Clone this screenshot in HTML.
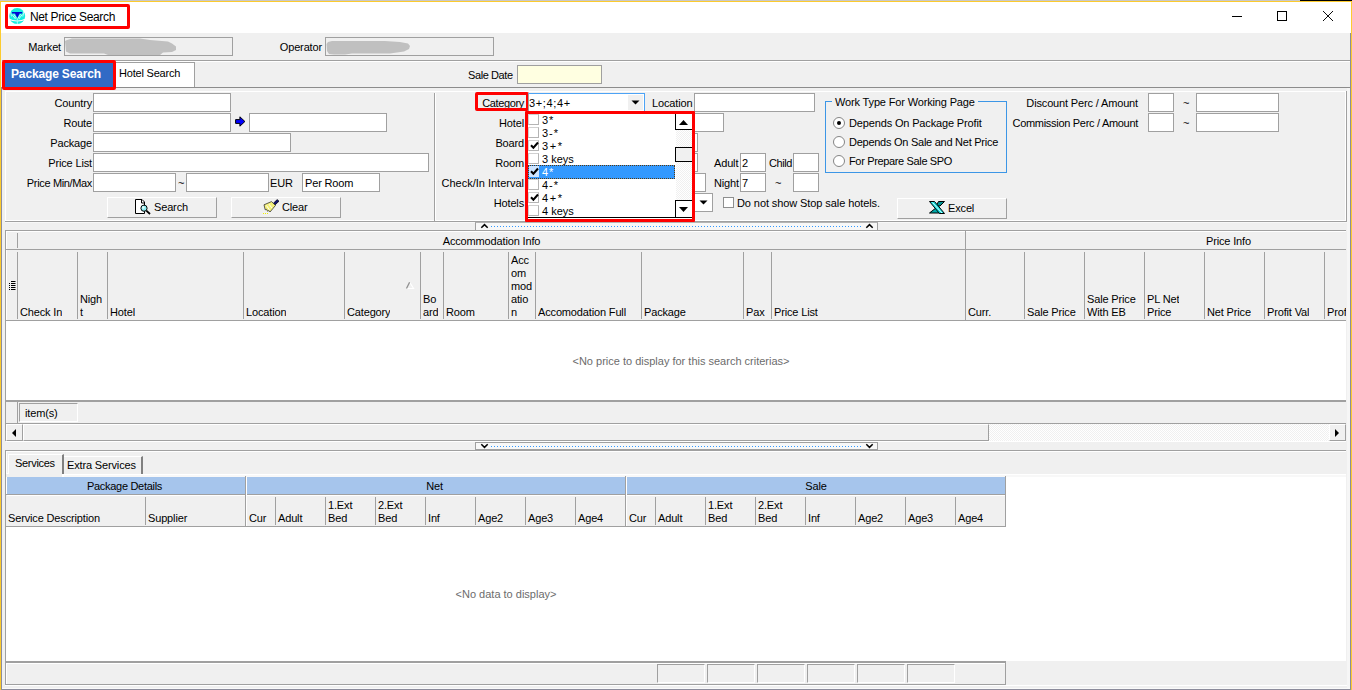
<!DOCTYPE html>
<html>
<head>
<meta charset="utf-8">
<title>Net Price Search</title>
<style>
html,body{margin:0;padding:0;}
body{width:1352px;height:690px;overflow:hidden;background:#f0f0f0;position:relative;
 font-family:"Liberation Sans",sans-serif;font-size:11px;line-height:13px;color:#000;letter-spacing:-0.15px;}
.a{position:absolute;box-sizing:border-box;}
.t{position:absolute;white-space:nowrap;line-height:13px;}
.r{position:absolute;white-space:nowrap;line-height:13px;text-align:right;}
.inp{position:absolute;box-sizing:border-box;background:#fff;border:1px solid #a0a0a0;height:19px;padding:3px 0 0 2px;white-space:nowrap;overflow:hidden;}
.btn{position:absolute;box-sizing:border-box;background:#f0f0f0;border:1px solid #a0a0a0;border-top-color:#fff;border-left-color:#fff;height:21px;}
.hl{position:absolute;height:1px;background:#a0a0a0;}
.vl{position:absolute;width:1px;background:#a0a0a0;}
.red{position:absolute;box-sizing:border-box;border:3px solid #ff0000;border-radius:2px;}
.ch{position:absolute;white-space:nowrap;line-height:13px;}
.dither{background-image:conic-gradient(#fff 25%,#f0f0f0 0 50%,#fff 0 75%,#f0f0f0 0);background-size:2px 2px;}
</style>
</head>
<body>
<!-- window frame -->
<div class="a" style="left:0;top:0;width:1352px;height:1px;background:#c9c9c9"></div>
<div class="a" style="left:1300px;top:0;width:52px;height:1px;background:#000"></div>
<div class="a" style="left:0;top:1px;width:1352px;height:1px;background:#fccb2e"></div>
<div class="a" style="left:0;top:1px;width:1px;height:689px;background:#fccb2e"></div>
<div class="a" style="left:1351px;top:1px;width:1px;height:689px;background:#fccb2e"></div>
<div class="a" style="left:1350px;top:33px;width:1px;height:657px;background:#8c8c9c"></div>
<!-- title bar -->
<div class="a" id="titlebar" style="left:1px;top:2px;width:1350px;height:31px;background:#fff"></div>
<svg class="a" style="left:9px;top:8px" width="17" height="17" viewBox="9 8 17 17">
 <circle cx="17.200" cy="16.100" r="8" fill="#14eee0"/>
 <path d="M9 13.500l1.300-2.500 1.200 5.500M25.300 13.500l-1.300-2.500-1.200 5.500" stroke="#fff" stroke-width="0.900" fill="none" opacity="0.800"/>
 <path d="M12 14.500l3.500 4.500M13.800 14.200l2.600 4M22.300 14.500l-3.500 4.500M20.600 14.200l-2.600 4" stroke="#c8fffa" stroke-width="1" fill="none"/>
 <path d="M11.900 11.900h10.300v1.500h-2.600l-2.300 4.700-2.300-4.700h-3.100z" fill="#0404d4"/>
 <path d="M9.300 19.300c2.500 1.300 5.300 1.600 7.600 1.700M25 19.300c-2.500 1.300-5 1.600-7.300 1.700" stroke="#fff" stroke-width="1.200" fill="none"/>
 <path d="M17.300 18.500v5.600" stroke="#c8fffa" stroke-width="0.900"/>
</svg>
<div class="t" style="left:30px;top:10px;font-size:12px;line-height:15px;letter-spacing:-0.36px">Net Price Search</div>
<div class="red" style="left:5px;top:4px;width:125px;height:25px"></div>
<!-- window controls -->
<div class="a" style="left:1232px;top:16px;width:10px;height:1px;background:#000"></div>
<div class="a" style="left:1277px;top:11px;width:10px;height:10px;border:1px solid #000"></div>
<svg class="a" style="left:1322px;top:10px" width="12" height="12" viewBox="0 0 12 12"><path d="M1 1L11 11M11 1L1 11" stroke="#000" stroke-width="0.95" fill="none"/></svg>

<!-- market / operator row -->
<div class="r" style="left:0;width:61px;top:41px">Market</div>
<div class="a" style="left:64px;top:37px;width:169px;height:19px;border:1px solid #a0a0a0;background:#f0f0f0"></div>
<svg class="a" style="left:65px;top:38px" width="115" height="17" viewBox="65 38 115 17"><path d="M65 41L67 40 72 38.500H140L150 40 168 41.500 172 43.500 176 46.500 176 50 172 52 163 52.500 160 55H108L104 53.500H70L66 51.500Z" fill="#c0c0c0"/></svg>
<div class="r" style="left:200px;width:122px;top:41px">Operator</div>
<div class="a" style="left:325px;top:37px;width:169px;height:19px;border:1px solid #a0a0a0;background:#f0f0f0"></div>
<svg class="a" style="left:326px;top:38px" width="90" height="17" viewBox="326 38 90 17"><path d="M326.500 44L328 42 332 41H385L400 42 408 43.500 410 46 409 49 404 51.500 390 53.500H352L345 54.500H334L329 54 327 51Z" fill="#c0c0c0"/></svg>
<div class="hl" style="left:2px;top:60px;width:1348px"></div>
<div class="hl" style="left:2px;top:61px;width:1348px;background:#fff"></div>

<!-- tabs -->
<div class="a" style="left:115px;top:62px;width:80px;height:26px;background:#fff;border:1px solid #a0a0a0;border-bottom:none"></div>
<div class="t" style="left:119px;top:67px;letter-spacing:-0.2px">Hotel Search</div>
<div class="hl" style="left:116px;top:87px;width:1234px;background:#8c8c8c"></div>
<div class="a" style="left:4px;top:62px;width:109px;height:26px;background:#316ac5"></div>
<div class="t" style="left:11px;top:68px;font-size:12px;font-weight:bold;color:#fff;letter-spacing:-0.15px">Package Search</div>
<div class="red" style="left:2px;top:60px;width:114px;height:30px"></div>
<div class="t" style="left:468px;top:69px;letter-spacing:-0.4px">Sale Date</div>
<div class="a" style="left:517px;top:65px;width:85px;height:19px;border:1px solid #a0a0a0;background:#ffffe1"></div>

<!-- main panel frame -->
<div class="vl" style="left:1px;top:87px;height:603px;background:#8c8c9c"></div>
<div class="hl" style="left:5px;top:91px;width:1341px;background:#fff;height:1px"></div>
<div class="vl" style="left:5px;top:91px;height:130px;background:#fff"></div>
<div class="vl" style="left:434px;top:93px;height:128px"></div>
<div class="vl" style="left:435px;top:93px;height:128px;background:#fff"></div>
<div class="hl" style="left:5px;top:221px;width:1342px"></div>
<div class="hl" style="left:5px;top:222px;width:1342px;background:#f8f8f8"></div>
<div class="vl" style="left:1346px;top:91px;height:131px"></div>
<div class="vl" style="left:1345px;top:92px;height:129px;background:#fff"></div>
<div class="hl" style="left:436px;top:220px;width:909px;background:#fff"></div>
<div class="hl" style="left:6px;top:220px;width:428px;background:#fff"></div>
<div class="vl" style="left:1347px;top:88px;height:600px;background:#f6f6f6;width:3px"></div>

<!-- left panel -->
<div class="r" style="left:0;width:92px;top:97px">Country</div>
<div class="inp" style="left:93px;top:93px;width:138px"></div>
<div class="r" style="left:0;width:92px;top:117px">Route</div>
<div class="inp" style="left:93px;top:113px;width:138px"></div>
<svg class="a" style="left:235px;top:116px" width="11" height="11" viewBox="0 0 11 11"><path d="M0.600 3.600h4.300v-2.800l5 4.700-5 4.700v-2.800h-4.300z" fill="#0000ff" stroke="#000" stroke-width="1"/></svg>
<div class="inp" style="left:249px;top:113px;width:138px"></div>
<div class="r" style="left:0;width:92px;top:137px">Package</div>
<div class="inp" style="left:93px;top:133px;width:198px"></div>
<div class="r" style="left:0;width:92px;top:157px">Price List</div>
<div class="inp" style="left:93px;top:153px;width:336px"></div>
<div class="r" style="left:0;width:92px;top:177px;letter-spacing:-0.35px">Price Min/Max</div>
<div class="inp" style="left:93px;top:173px;width:83px"></div>
<div class="t" style="left:178px;top:177px">~</div>
<div class="inp" style="left:186px;top:173px;width:83px"></div>
<div class="t" style="left:270px;top:177px">EUR</div>
<div class="inp" style="left:302px;top:173px;width:78px">Per Room</div>
<div class="btn" style="left:107px;top:197px;width:110px"></div>
<svg class="a" style="left:134px;top:199px" width="18" height="17" viewBox="0 0 18 17">
 <path d="M1.500 0.500h6.500l2.500 2.500v11.500h-9z" fill="#fff" stroke="#000" stroke-width="1"/>
 <path d="M7.500 0.500v3.500h3" fill="none" stroke="#000" stroke-width="1"/>
 <circle cx="10" cy="9.200" r="3.100" fill="#8ff0f4" stroke="#000" stroke-width="1"/>
 <circle cx="9.300" cy="8.500" r="1.200" fill="#e8ffff"/>
 <path d="M12.300 11.600l3.700 3.400" stroke="#000" stroke-width="1.800"/>
</svg>
<div class="t" style="left:154px;top:201px">Search</div>
<div class="btn" style="left:231px;top:197px;width:110px"></div>
<svg class="a" style="left:262px;top:199px" width="18" height="17" viewBox="0 0 18 17">
 <path d="M11.300 4.300L15.200 0.600 17 2.200 13 6z" fill="#101070" stroke="#000" stroke-width="0.700"/>
 <path d="M2 5.800L9.500 2.600 13.500 6.400 8 13 6.800 11.500 5.600 12.300 4.600 10.300 3.200 10.800z" fill="#f4f07a" stroke="#333" stroke-width="0.800"/>
 <path d="M4.500 6.500l3 4.500M7 5.200l3 4" stroke="#fff" stroke-width="0.900"/>
 <path d="M1 14.500h1M3 14.500h1M5 14.500h1" stroke="#f0f000" stroke-width="1"/>
</svg>
<div class="t" style="left:282px;top:201px">Clear</div>

<!-- middle panel -->
<div class="r" style="left:430px;width:94px;top:97px;letter-spacing:-0.35px">Category</div>
<div class="red" style="left:475px;top:92px;width:54px;height:19px"></div>
<div class="a" style="left:528px;top:93px;width:117px;height:19px;background:#fff;border:1px solid #4da3f5;border-left-color:#a0a0a0"></div>
<div class="t" style="left:529px;top:97px;letter-spacing:0.65px">3+;4;4+</div>
<div class="a" style="left:628px;top:95px;width:15px;height:15px;background:#f0f0f0"></div>
<svg class="a" style="left:631px;top:100px" width="9" height="5" viewBox="0 0 9 5"><path d="M0.5 0.5h8l-4 4z" fill="#000"/></svg>
<div class="t" style="left:652px;top:97px">Location</div>
<div class="inp" style="left:694px;top:93px;width:121px"></div>
<div class="r" style="left:430px;width:94px;top:117px">Hotel</div>
<div class="inp" style="left:620px;top:113px;width:104px"></div>
<div class="r" style="left:430px;width:94px;top:137px">Board</div>
<div class="inp" style="left:620px;top:133px;width:78px"></div>
<div class="r" style="left:430px;width:94px;top:157px">Room</div>
<div class="inp" style="left:620px;top:153px;width:78px"></div>
<div class="r" style="left:430px;width:94px;top:177px;letter-spacing:0">Check/In Interval</div>
<div class="inp" style="left:620px;top:173px;width:86px"></div>
<div class="r" style="left:430px;width:94px;top:197px">Hotels</div>
<div class="inp" style="left:620px;top:193px;width:93px"></div>
<svg class="a" style="left:699px;top:200px" width="9" height="5" viewBox="0 0 9 5"><path d="M0.5 0.5h8l-4 4z" fill="#000"/></svg>
<div class="t" style="left:714px;top:157px">Adult</div>
<div class="inp" style="left:740px;top:153px;width:26px;padding-left:1px">2</div>
<div class="t" style="left:769px;top:157px;letter-spacing:-0.4px">Child</div>
<div class="inp" style="left:793px;top:153px;width:26px"></div>
<div class="t" style="left:714px;top:177px">Night</div>
<div class="inp" style="left:740px;top:173px;width:26px;padding-left:1px">7</div>
<div class="t" style="left:775px;top:177px">~</div>
<div class="inp" style="left:793px;top:173px;width:26px"></div>
<div class="a" style="left:723px;top:197px;width:11px;height:11px;background:#fff;border:1px solid #8e8f8f"></div>
<div class="t" style="left:737px;top:197px;letter-spacing:-0.09px">Do not show Stop sale hotels.</div>

<!-- dropdown list -->
<div class="a" style="left:528px;top:113px;width:166px;height:107px;background:#fff"></div>
<div class="a dither" style="left:676px;top:114px;width:17px;height:104px"></div>
<div class="a" style="left:528px;top:114px;width:11px;height:11px;background:#fff;border:1px solid #b4b4b4;border-top-color:#d0d0d0;border-left-color:#d0d0d0"></div>
<div class="t" style="left:542px;top:114px;color:#000;letter-spacing:1px">3*</div>
<div class="a" style="left:528px;top:127px;width:11px;height:11px;background:#fff;border:1px solid #b4b4b4;border-top-color:#d0d0d0;border-left-color:#d0d0d0"></div>
<div class="t" style="left:542px;top:127px;color:#000;letter-spacing:1px">3-*</div>
<div class="a" style="left:528px;top:140px;width:11px;height:11px;background:#fff;border:1px solid #b4b4b4;border-top-color:#d0d0d0;border-left-color:#d0d0d0"></div>
<svg class="a" style="left:530px;top:141px" width="9" height="9" viewBox="0 0 9 9"><path d="M1 4.200L3.400 6.700 8 1.500" stroke="#000" stroke-width="2" fill="none"/></svg>
<div class="t" style="left:542px;top:140px;color:#000;letter-spacing:1.6px">3+*</div>
<div class="a" style="left:528px;top:153px;width:11px;height:11px;background:#fff;border:1px solid #b4b4b4;border-top-color:#d0d0d0;border-left-color:#d0d0d0"></div>
<div class="t" style="left:542px;top:153px;color:#000;letter-spacing:0">3 keys</div>
<div class="a" style="left:528px;top:165px;width:147px;height:14px;background:#3399ff;border:1px dotted #5a3a10"></div>
<div class="a" style="left:529px;top:166px;width:10px;height:11px;background:#cce4ff"></div>
<svg class="a" style="left:530px;top:167px" width="9" height="9" viewBox="0 0 9 9"><path d="M1 4.200L3.400 6.700 8 1.500" stroke="#000" stroke-width="2" fill="none"/></svg>
<div class="t" style="left:542px;top:166px;color:#fff;letter-spacing:1px">4*</div>
<div class="a" style="left:528px;top:179px;width:11px;height:11px;background:#fff;border:1px solid #b4b4b4;border-top-color:#d0d0d0;border-left-color:#d0d0d0"></div>
<div class="t" style="left:542px;top:179px;color:#000;letter-spacing:1px">4-*</div>
<div class="a" style="left:528px;top:192px;width:11px;height:11px;background:#fff;border:1px solid #b4b4b4;border-top-color:#d0d0d0;border-left-color:#d0d0d0"></div>
<svg class="a" style="left:530px;top:193px" width="9" height="9" viewBox="0 0 9 9"><path d="M1 4.200L3.400 6.700 8 1.500" stroke="#000" stroke-width="2" fill="none"/></svg>
<div class="t" style="left:542px;top:192px;color:#000;letter-spacing:1.6px">4+*</div>
<div class="a" style="left:528px;top:205px;width:11px;height:11px;background:#fff;border:1px solid #b4b4b4;border-top-color:#d0d0d0;border-left-color:#d0d0d0"></div>
<div class="t" style="left:542px;top:205px;color:#000;letter-spacing:0">4 keys</div>
<div class="a" style="left:675px;top:113px;width:18px;height:17px;background:#fff;border:1px solid #000"></div>
<svg class="a" style="left:679px;top:120px" width="9" height="5" viewBox="0 0 9 5"><path d="M0 5h9l-4.500-5z" fill="#000"/></svg>
<div class="a" style="left:675px;top:147px;width:18px;height:15px;background:#f0f0f0;border:1px solid #000"></div>
<div class="a" style="left:675px;top:200px;width:18px;height:18px;background:#fff;border:1px solid #000"></div>
<svg class="a" style="left:679px;top:207px" width="9" height="5" viewBox="0 0 9 5"><path d="M0 0h9l-4.500 5z" fill="#000"/></svg>
<div class="hl" style="left:528px;top:217px;width:165px;background:#000"></div>
<div class="red" style="left:525px;top:111px;width:170px;height:111px;border-radius:1px"></div>

<!-- right panel -->
<div class="a" style="left:825px;top:101px;width:182px;height:72px;border:1px solid #3c96e6"></div>
<div class="t" style="left:832px;top:96px;background:#f0f0f0;padding:0 3px">Work Type For Working Page</div>
<div class="t" style="left:849px;top:117px">Depends On Package Profit</div>
<div class="t" style="left:849px;top:136px;letter-spacing:-0.26px">Depends On Sale and Net Price</div>
<div class="t" style="left:849px;top:155px;letter-spacing:-0.35px">For Prepare Sale SPO</div>
<div class="a" style="left:833px;top:117px;width:12px;height:12px;border-radius:50%;border:1px solid #858585;background:#fff"></div>
<div class="a" style="left:837px;top:121px;width:4px;height:4px;border-radius:50%;background:#000"></div>
<div class="a" style="left:833px;top:136px;width:12px;height:12px;border-radius:50%;border:1px solid #858585;background:#fff"></div>
<div class="a" style="left:833px;top:155px;width:12px;height:12px;border-radius:50%;border:1px solid #858585;background:#fff"></div>
<div class="r" style="left:1000px;width:138px;top:97px">Discount Perc / Amount</div>
<div class="inp" style="left:1148px;top:93px;width:26px"></div>
<div class="t" style="left:1183px;top:97px">~</div>
<div class="inp" style="left:1196px;top:93px;width:83px"></div>
<div class="r" style="left:1000px;width:138px;top:117px;letter-spacing:-0.3px">Commission Perc / Amount</div>
<div class="inp" style="left:1148px;top:113px;width:26px"></div>
<div class="t" style="left:1183px;top:117px">~</div>
<div class="inp" style="left:1196px;top:113px;width:83px"></div>
<div class="btn" style="left:897px;top:198px;width:110px"></div>
<svg class="a" style="left:928px;top:200px" width="18" height="15" viewBox="0 0 18 15">
 <path d="M10.500 1.500h6l-4.500 4.500h-4z" fill="#009090" stroke="#000" stroke-width="1"/>
 <path d="M1.500 13h10.500l-3.500-5.500z" fill="#00a8a8" stroke="#000" stroke-width="1"/>
 <path d="M1.500 1.500h5l10 12h-5z" fill="#10d8d8" stroke="#000" stroke-width="1"/>
 <path d="M4.500 2.500l9.500 10.500" stroke="#d8ffff" stroke-width="1"/>
</svg>
<div class="t" style="left:948px;top:202px">Excel</div>

<!-- splitter 1 -->
<div class="a" style="left:475px;top:222px;width:403px;height:8px;border-left:1px solid #a0a0a0;border-right:1px solid #a0a0a0;border-top:1px solid #b4b4b4;background:#f8f8f8"></div>
<div class="a" style="left:491px;top:226px;width:370px;height:1px;background-image:linear-gradient(90deg,#3399ff 0,#3399ff 1px,transparent 1px);background-size:3px 1px"></div>
<svg class="a" style="left:480px;top:223px" width="9" height="6" viewBox="0 0 9 6"><path d="M1.300 4.800L4.500 1.600 7.700 4.800" stroke="#000" stroke-width="1.500" fill="none"/></svg>
<svg class="a" style="left:865px;top:223px" width="9" height="6" viewBox="0 0 9 6"><path d="M1.300 4.800L4.500 1.600 7.700 4.800" stroke="#000" stroke-width="1.500" fill="none"/></svg>
<!-- grid -->
<div class="a" style="left:5px;top:230px;width:1341px;height:211px;border:1px solid #a0a0a0;border-right:none;border-bottom:none;background:#f0f0f0"></div>
<div class="hl" style="left:6px;top:231px;width:1340px;background:#fff"></div>
<div class="vl" style="left:6px;top:231px;height:90px;background:#fff"></div>
<div class="hl" style="left:6px;top:249px;width:1340px"></div>
<div class="vl" style="left:17px;top:233px;height:15px"></div>
<div class="vl" style="left:17px;top:252px;height:67px"></div>
<div class="vl" style="left:17px;top:402px;height:21px"></div>
<div class="vl" style="left:965px;top:231px;height:90px"></div>
<div class="t" style="left:18px;width:947px;top:235px;text-align:center">Accommodation Info</div>
<div class="t" style="left:1206px;top:235px">Price Info</div>
<div class="hl" style="left:6px;top:320px;width:1340px"></div>
<svg class="a" style="left:9px;top:281px" width="7" height="9" viewBox="0 0 7 9"><path d="M2 0.500h4.500M0 2.500h1M2 2.500h4.500M2 4.500h4.500M0 4.500h1M0 6.500h1M2 6.500h4.500M0 8.500h1M2 8.500h4.500" stroke="#000" stroke-width="1"/></svg>
<div class="ch" style="left:20px;top:306px;max-width:1326px;overflow:hidden">Check In</div>
<div class="vl" style="left:77px;top:252px;height:67px"></div>
<div class="ch" style="left:80px;top:293px;max-width:1266px;overflow:hidden">Nigh<br>t</div>
<div class="vl" style="left:107px;top:252px;height:67px"></div>
<div class="ch" style="left:110px;top:306px;max-width:1236px;overflow:hidden">Hotel</div>
<div class="vl" style="left:243px;top:252px;height:67px"></div>
<div class="ch" style="left:246px;top:306px;max-width:1100px;overflow:hidden">Location</div>
<div class="vl" style="left:344px;top:252px;height:67px"></div>
<div class="ch" style="left:347px;top:306px;max-width:999px;overflow:hidden">Category</div>
<div class="vl" style="left:420px;top:252px;height:67px"></div>
<div class="ch" style="left:423px;top:293px;max-width:923px;overflow:hidden">Bo<br>ard</div>
<div class="vl" style="left:443px;top:252px;height:67px"></div>
<div class="ch" style="left:446px;top:306px;max-width:900px;overflow:hidden">Room</div>
<div class="vl" style="left:508px;top:252px;height:67px"></div>
<div class="ch" style="left:511px;top:254px;max-width:835px;overflow:hidden">Acc<br>om<br>mod<br>atio<br>n</div>
<div class="vl" style="left:535px;top:252px;height:67px"></div>
<div class="ch" style="left:538px;top:306px;max-width:808px;overflow:hidden">Accomodation Full</div>
<div class="vl" style="left:641px;top:252px;height:67px"></div>
<div class="ch" style="left:644px;top:306px;max-width:702px;overflow:hidden">Package</div>
<div class="vl" style="left:743px;top:252px;height:67px"></div>
<div class="ch" style="left:746px;top:306px;max-width:600px;overflow:hidden">Pax</div>
<div class="vl" style="left:771px;top:252px;height:67px"></div>
<div class="ch" style="left:774px;top:306px;max-width:572px;overflow:hidden">Price List</div>
<div class="ch" style="left:968px;top:306px;max-width:378px;overflow:hidden">Curr.</div>
<div class="vl" style="left:1024px;top:252px;height:67px"></div>
<div class="ch" style="left:1027px;top:306px;max-width:319px;overflow:hidden">Sale Price</div>
<div class="vl" style="left:1084px;top:252px;height:67px"></div>
<div class="ch" style="left:1087px;top:293px;max-width:259px;overflow:hidden">Sale Price<br>With EB</div>
<div class="vl" style="left:1144px;top:252px;height:67px"></div>
<div class="ch" style="left:1147px;top:293px;max-width:199px;overflow:hidden">PL Net<br>Price</div>
<div class="vl" style="left:1204px;top:252px;height:67px"></div>
<div class="ch" style="left:1207px;top:306px;max-width:139px;overflow:hidden">Net Price</div>
<div class="vl" style="left:1264px;top:252px;height:67px"></div>
<div class="ch" style="left:1267px;top:306px;max-width:79px;overflow:hidden">Profit Val</div>
<div class="vl" style="left:1324px;top:252px;height:67px"></div>
<div class="ch" style="left:1327px;top:306px;max-width:19px;overflow:hidden">Prof</div>
<svg class="a" style="left:405px;top:281px" width="10" height="9" viewBox="0 0 10 9"><path d="M4.600 1.200L8.600 7.500H1.500" stroke="#fff" stroke-width="1.100" fill="none"/><path d="M1.500 7.500L4.600 1.200" stroke="#909090" stroke-width="1.300"/></svg>
<div class="a" style="left:6px;top:321px;width:1340px;height:80px;background:#fff"></div>
<div class="t" style="left:6px;width:1350px;top:355px;text-align:center;color:#6c6c6c;letter-spacing:0">&lt;No price to display for this search criterias&gt;</div>
<div class="hl" style="left:6px;top:400px;width:1340px;height:2px;background:#a0a0a0"></div>
<div class="a" style="left:19px;top:403px;width:59px;height:19px;border:1px solid #a0a0a0;border-right-color:#fff;border-bottom-color:#fff"></div>
<div class="t" style="left:25px;top:407px">item(s)</div>
<div class="hl" style="left:6px;top:423px;width:1340px"></div>
<div class="a dither" style="left:6px;top:424px;width:1340px;height:17px"></div>
<div class="hl" style="left:6px;top:441px;width:1340px;background:#fff"></div>
<div class="a" style="left:6px;top:424px;width:17px;height:17px;background:#f0f0f0;border-right:1px solid #a0a0a0;border-bottom:1px solid #a0a0a0;border-top:1px solid #fff;border-left:1px solid #fff"></div>
<svg class="a" style="left:12px;top:429px" width="4" height="8" viewBox="0 0 4 8"><path d="M4 0v8l-4-4z" fill="#000"/></svg>
<div class="a" style="left:23px;top:424px;width:966px;height:17px;background:#f0f0f0;border-right:1px solid #a0a0a0;border-bottom:1px solid #a0a0a0;border-top:1px solid #fff;border-left:1px solid #fff"></div>
<div class="a" style="left:1329px;top:424px;width:17px;height:17px;background:#f0f0f0;border-right:1px solid #a0a0a0;border-bottom:1px solid #a0a0a0;border-top:1px solid #fff;border-left:1px solid #fff"></div>
<svg class="a" style="left:1335px;top:429px" width="4" height="8" viewBox="0 0 4 8"><path d="M0 0v8l4-4z" fill="#000"/></svg>
<div class="a" style="left:475px;top:442px;width:403px;height:8px;border:1px solid #a0a0a0;background:#f8f8f8"></div>
<div class="a" style="left:491px;top:446px;width:370px;height:1px;background-image:linear-gradient(90deg,#3399ff 0,#3399ff 1px,transparent 1px);background-size:3px 1px"></div>
<svg class="a" style="left:480px;top:443px" width="9" height="6" viewBox="0 0 9 6"><path d="M1.300 1.200L4.500 4.400 7.700 1.200" stroke="#000" stroke-width="1.500" fill="none"/></svg>
<svg class="a" style="left:865px;top:443px" width="9" height="6" viewBox="0 0 9 6"><path d="M1.300 1.200L4.500 4.400 7.700 1.200" stroke="#000" stroke-width="1.500" fill="none"/></svg>
<!-- lower -->
<div class="hl" style="left:5px;top:450px;width:1341px"></div>
<div class="hl" style="left:6px;top:451px;width:1340px;background:#fff"></div>
<div class="vl" style="left:5px;top:450px;height:235px"></div>
<div class="vl" style="left:6px;top:451px;height:24px;background:#fff"></div>
<div class="a" style="left:8px;top:454px;width:56px;height:20px;background:#f0f0f0;border:1px solid #fff;border-right:2px solid #808080;border-bottom:none"></div>
<div class="t" style="left:15px;top:457px;letter-spacing:-0.3px">Services</div>
<div class="a" style="left:64px;top:456px;width:79px;height:18px;background:#f0f0f0;border-top:1px solid #fff;border-right:2px solid #808080"></div>
<div class="t" style="left:67px;top:459px">Extra Services</div>
<div class="a" style="left:6px;top:474px;width:1340px;height:187px;background:#fff"></div>
<div class="hl" style="left:64px;top:475px;width:1282px;height:2px;background:#f8f8f8"></div>
<div class="a" style="left:9px;top:474px;width:53px;height:3px;background:#f0f0f0"></div>
<div class="a" style="left:6px;top:474px;width:3px;height:3px;background:#f0f0f0"></div>
<div class="hl" style="left:6px;top:473px;width:3px;background:#fff"></div>
<div class="a" style="left:7px;top:477px;width:238px;height:17px;background:#a6c5ec"></div>
<div class="t" style="left:7px;width:238px;top:480px;text-align:center;letter-spacing:-0.3px;padding-right:3px;box-sizing:border-box">Package Details</div>
<div class="a" style="left:247px;top:477px;width:378px;height:17px;background:#a6c5ec"></div>
<div class="t" style="left:247px;width:378px;top:480px;text-align:center;padding-right:3px;box-sizing:border-box">Net</div>
<div class="a" style="left:627px;top:477px;width:378px;height:17px;background:#a6c5ec"></div>
<div class="t" style="left:627px;width:378px;top:480px;text-align:center">Sale</div>
<div class="a" style="left:6px;top:494px;width:1000px;height:33px;background:#f0f0f0;border-top:1px solid #a0a0a0;border-bottom:1px solid #a0a0a0"></div>
<div class="hl" style="left:7px;top:495px;width:998px;background:#fff"></div>
<div class="vl" style="left:245px;top:476px;height:50px"></div>
<div class="vl" style="left:246px;top:477px;height:49px;background:#fff"></div>
<div class="vl" style="left:625px;top:476px;height:50px"></div>
<div class="vl" style="left:626px;top:477px;height:49px;background:#fff"></div>
<div class="vl" style="left:1005px;top:476px;height:51px"></div>
<div class="ch" style="left:8px;top:512px">Service Description</div>
<div class="vl" style="left:145px;top:497px;height:28px"></div>
<div class="ch" style="left:148px;top:512px">Supplier</div>
<div class="ch" style="left:249px;top:512px">Cur</div>
<div class="vl" style="left:275px;top:497px;height:28px"></div>
<div class="ch" style="left:278px;top:512px">Adult</div>
<div class="vl" style="left:325px;top:497px;height:28px"></div>
<div class="ch" style="left:328px;top:499px">1.Ext<br>Bed</div>
<div class="vl" style="left:375px;top:497px;height:28px"></div>
<div class="ch" style="left:378px;top:499px">2.Ext<br>Bed</div>
<div class="vl" style="left:425px;top:497px;height:28px"></div>
<div class="ch" style="left:428px;top:512px">Inf</div>
<div class="vl" style="left:475px;top:497px;height:28px"></div>
<div class="ch" style="left:478px;top:512px">Age2</div>
<div class="vl" style="left:525px;top:497px;height:28px"></div>
<div class="ch" style="left:528px;top:512px">Age3</div>
<div class="vl" style="left:575px;top:497px;height:28px"></div>
<div class="ch" style="left:578px;top:512px">Age4</div>
<div class="ch" style="left:629px;top:512px">Cur</div>
<div class="vl" style="left:655px;top:497px;height:28px"></div>
<div class="ch" style="left:658px;top:512px">Adult</div>
<div class="vl" style="left:705px;top:497px;height:28px"></div>
<div class="ch" style="left:708px;top:499px">1.Ext<br>Bed</div>
<div class="vl" style="left:755px;top:497px;height:28px"></div>
<div class="ch" style="left:758px;top:499px">2.Ext<br>Bed</div>
<div class="vl" style="left:805px;top:497px;height:28px"></div>
<div class="ch" style="left:808px;top:512px">Inf</div>
<div class="vl" style="left:855px;top:497px;height:28px"></div>
<div class="ch" style="left:858px;top:512px">Age2</div>
<div class="vl" style="left:905px;top:497px;height:28px"></div>
<div class="ch" style="left:908px;top:512px">Age3</div>
<div class="vl" style="left:955px;top:497px;height:28px"></div>
<div class="ch" style="left:958px;top:512px">Age4</div>
<div class="t" style="left:6px;width:1000px;top:588px;text-align:center;color:#6c6c6c;letter-spacing:0">&lt;No data to display&gt;</div>
<div class="a" style="left:6px;top:661px;width:1000px;height:24px;background:#f0f0f0;border:1px solid #a0a0a0;border-left:none;border-top:2px solid #a0a0a0"></div>
<div class="hl" style="left:6px;top:663px;width:999px;background:#fff"></div>
<div class="vl" style="left:6px;top:663px;height:21px;background:#fff"></div>
<div class="a" style="left:657px;top:664px;width:48px;height:19px;border:1px solid #a0a0a0;border-right-color:#fff;border-bottom-color:#fff"></div>
<div class="a" style="left:707px;top:664px;width:48px;height:19px;border:1px solid #a0a0a0;border-right-color:#fff;border-bottom-color:#fff"></div>
<div class="a" style="left:757px;top:664px;width:48px;height:19px;border:1px solid #a0a0a0;border-right-color:#fff;border-bottom-color:#fff"></div>
<div class="a" style="left:807px;top:664px;width:48px;height:19px;border:1px solid #a0a0a0;border-right-color:#fff;border-bottom-color:#fff"></div>
<div class="a" style="left:857px;top:664px;width:48px;height:19px;border:1px solid #a0a0a0;border-right-color:#fff;border-bottom-color:#fff"></div>
<div class="a" style="left:907px;top:664px;width:48px;height:19px;border:1px solid #a0a0a0;border-right-color:#fff;border-bottom-color:#fff"></div>
<div class="hl" style="left:5px;top:685px;width:1342px;background:#fff"></div>
<div class="hl" style="left:2px;top:688px;width:1348px;background:#fafafa;height:1px"></div>
<div class="hl" style="left:1px;top:689px;width:1350px;background:#8c8c9c"></div>
</body>
</html>
